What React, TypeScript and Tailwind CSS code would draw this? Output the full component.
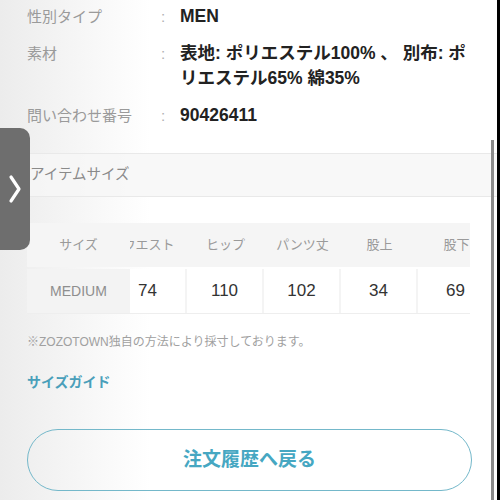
import React from 'react';

const FONT = '"Liberation Sans", "Noto Sans CJK JP", sans-serif';

const specs = [
  { label: '性別タイプ', value: ['MEN'] },
  { label: '素材', value: ['表地: ポリエステル100% 、 別布: ポ', 'リエステル65% 綿35%'] },
  { label: '問い合わせ番号', value: ['90426411'] },
];

const columns = [
  { name: 'ウエスト', value: '74' },
  { name: 'ヒップ', value: '110' },
  { name: 'パンツ丈', value: '102' },
  { name: '股上', value: '34' },
  { name: '股下', value: '69' },
];

const SpecRow = ({ label, value }: { label: string; value: string[] }) => (
  <div className="flex">
    <div className="w-[161px] shrink-0 pl-[27px] text-[15px] leading-[25px] text-[#9a9a9a]">{label}</div>
    <div className="w-[19px] shrink-0 text-[15px] leading-[25px] text-[#b0b0b0]">:</div>
    <div className="w-[292px] text-[17.5px] leading-[25px] font-semibold text-[#222]">
      {value.map((line) => (
        <div key={line}>{line}</div>
      ))}
    </div>
  </div>
);

const App = () => {
  return (
    <div
      className="relative h-[500px] w-[500px] overflow-hidden bg-gradient-to-r from-[#ececec] via-white via-30% to-white"
      style={{ fontFamily: FONT }}
    >
      <div className="flex flex-col pt-[4px]">
        <div className="flex flex-col gap-[12px]">
          {specs.map((s) => (
            <SpecRow key={s.label} label={s.label} value={s.value} />
          ))}
        </div>

        {/* section header */}
        <div className="mt-[25px] flex h-[44px] items-center border-t border-b border-[#e9e9e9] bg-[#f6f6f6]/80 pl-[30px] text-[14.5px] text-[#8a8a8a]">
          アイテムサイズ
        </div>

        {/* size table */}
        <div className="ml-[27px] mt-[26px] flex w-[443px] flex-col gap-[2px]">
          <div className="flex h-[44px] bg-[#f5f5f5]">
            <div className="flex w-[103px] shrink-0 items-center justify-center text-[13px] text-[#9a9a9a]">サイズ</div>
            <div className="flex-1 overflow-hidden">
              <div className="ml-[-20px] flex h-full">
                {columns.map((c) => (
                  <div key={c.name} className="flex w-[77px] shrink-0 items-center justify-center text-[13px] text-[#9a9a9a]">
                    {c.name}
                  </div>
                ))}
              </div>
            </div>
          </div>
          <div className="flex h-[44px] bg-white shadow-[0_1px_0_#eeeeee]">
            <div className="flex w-[103px] shrink-0 items-center justify-center bg-[#f3f3f3] text-[14px] text-[#8e8e8e]">MEDIUM</div>
            <div className="flex-1 overflow-hidden">
              <div className="ml-[-20px] flex h-full">
                {columns.map((c) => (
                  <div
                    key={c.name}
                    className="flex w-[77px] shrink-0 items-center justify-center border-r-2 border-[#f4f4f4] text-[17px] text-[#333]"
                  >
                    {c.value}
                  </div>
                ))}
              </div>
            </div>
          </div>
        </div>

        <div className="ml-[27px] mt-[20px] text-[12px] text-[#a0a0a0]">※ZOZOTOWN独自の方法により採寸しております。</div>

        <div className="ml-[27px] mt-[21px] text-[14px] font-bold text-[#4a9fba]">サイズガイド</div>

        <button className="ml-[27px] mt-[36px] flex h-[62px] w-[445px] items-center justify-center rounded-full border-[1.5px] border-[#74b8ca] text-[19px] font-bold text-[#46a7c2]">
          注文履歴へ戻る
        </button>
      </div>

      {/* side tab */}
      <div className="absolute left-0 top-[128px] flex h-[122px] w-[30px] items-center justify-center rounded-r-[10px] bg-[#6e6e6e]">
        <svg width="14" height="30" viewBox="0 0 14 30" fill="none">
          <path d="M3 3 L11 15 L3 27" stroke="white" strokeWidth="3.2" strokeLinecap="round" strokeLinejoin="round" />
        </svg>
      </div>

      {/* scrollbar and frame edge */}
      <div className="absolute right-[6px] top-[140px] h-[360px] w-[3px] bg-[#8a8a8a]" />
      <div className="absolute right-0 top-0 h-[500px] w-[3px] bg-black" />
    </div>
  );
};

export default App;
